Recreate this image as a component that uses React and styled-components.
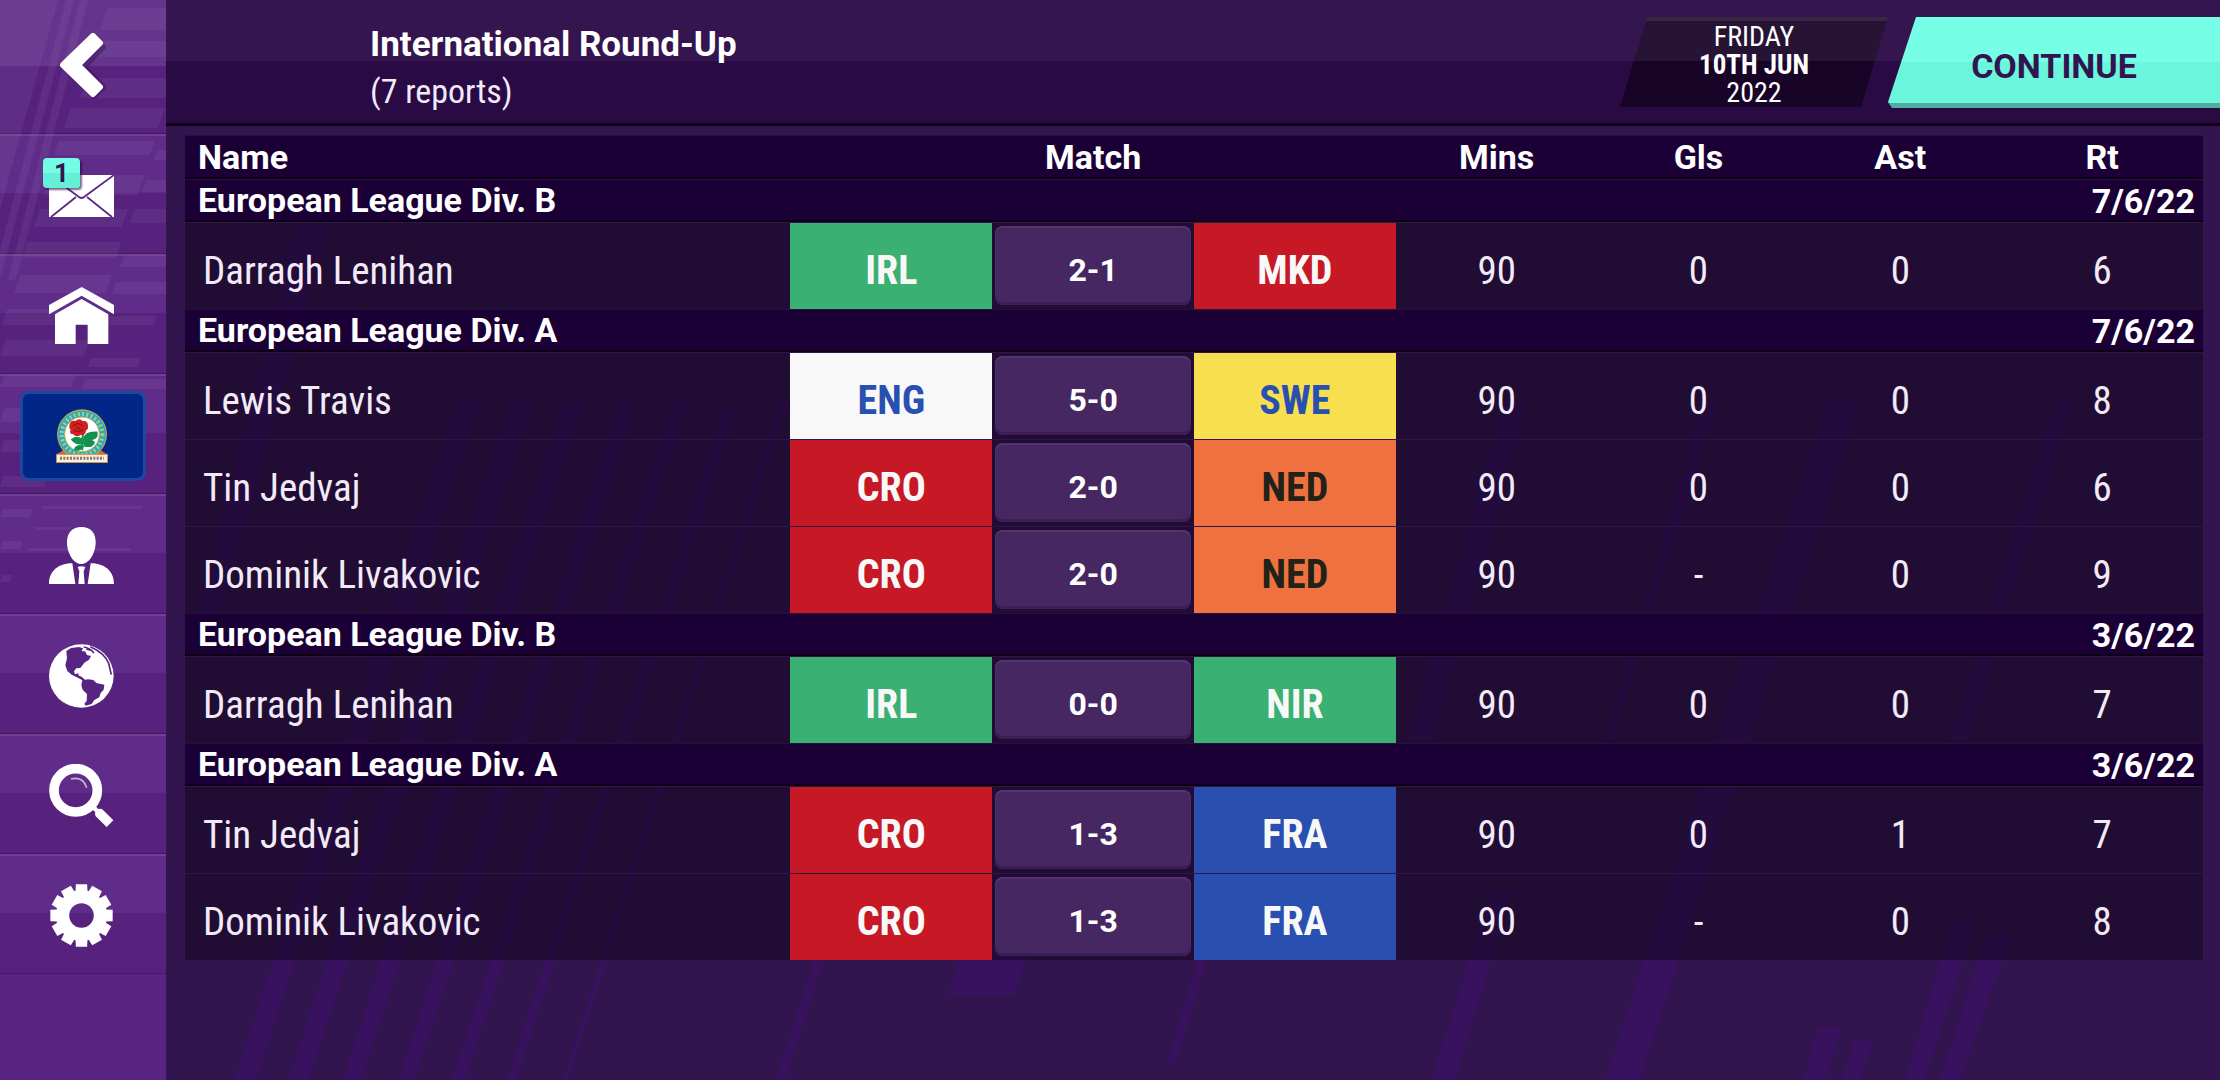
import React from "react";
import styled, { createGlobalStyle } from "styled-components";

const narrow = '"Roboto Condensed", "Liberation Sans Narrow", Roboto, sans-serif';
const bold = 'Roboto, "Liberation Sans", sans-serif';

const GlobalStyle = createGlobalStyle`
    * {
        box-sizing: border-box;
    }
    body {
        margin: 0;
        background: #32144e;
        color: #fff;
        font-family: ${bold};
    }
    button {
        border: 0;
        padding: 0;
        font: inherit;
        color: inherit;
        cursor: pointer;
    }
`;

const Page = styled.div`
    display: grid;
    grid-template-columns: 166px 1fr;
    min-height: 100vh;
`;

const Sidebar = styled.nav`
    position: relative;
    z-index: 0;
    display: flex;
    flex-direction: column;
    background: #582481;
`;

const SideArt = styled.svg`
    position: absolute;
    z-index: 1;
    top: 0;
    left: 0;
    pointer-events: none;
`;

const NavButton = styled.button`
    display: flex;
    align-items: center;
    justify-content: center;
    height: ${(props) => (props.$tall ? 134 : 120)}px;
    padding-top: ${(props) => (props.$tall ? 0 : 4)}px;
    background: linear-gradient(#5f2c89 50%, #56227e 50%);
    border-bottom: 1px solid #461968;
    box-shadow: ${(props) => (props.$tall ? "none" : "inset 0 2px #6d4190")};

    & > * {
        position: relative;
        z-index: 2;
    }
    svg {
        margin-right: 3px;
    }
`;

const MailIcon = styled.span`
    display: flex;
`;

const Badge = styled.span`
    position: absolute;
    top: -17px;
    left: -6px;
    width: 37px;
    height: 30px;
    border-radius: 4px;
    background: linear-gradient(#74fde4 50%, #66efd8 50%);
    box-shadow: 2px 2px 2px rgba(30, 10, 60, 0.6);
    color: #32144e;
    font-size: 26px;
    font-weight: 700;
    line-height: 30px;
    text-align: center;
`;

const Club = styled.span`
    display: flex;
    align-items: center;
    justify-content: center;
    width: 126px;
    height: 90px;
    border: 3px solid #1c48a2;
    border-radius: 9px;
    background: #002688;
`;

const Main = styled.main`
    position: relative;
    z-index: 0;
    min-width: 0;
`;

const MainArt = styled.svg`
    position: absolute;
    z-index: -1;
    top: 0;
    left: 0;
    width: 100%;
    height: 100%;
`;

const Header = styled.header`
    display: flex;
    align-items: flex-start;
    height: 126px;
    padding: 17px 0 0 204px;
    background: linear-gradient(#34154f 61px, #290a45 61px);
    border-bottom: 3px solid #100018;
`;

const Titles = styled.div`
    flex: 1;
    padding-top: 4px;
    line-height: 47px;
`;

const Title = styled.h1`
    margin: 0;
    font-size: 35px;
    font-weight: 700;
    line-height: inherit;
`;

const Subtitle = styled.p`
    margin: 0;
    font-family: ${narrow};
    font-size: 34px;
    color: #f2eaf7;
`;

const DateBox = styled.time`
    display: flex;
    flex-direction: column;
    align-items: center;
    width: 268px;
    height: 90px;
    padding-top: 6px;
    background: linear-gradient(#3a2745 4px, #271435 4px, #271435 44px, #180427 44px);
    clip-path: polygon(27px 0, 100% 0, 241px 100%, 0 100%);
    font-family: ${narrow};
    font-size: 28px;
    line-height: 28px;
`;

const Day = styled.strong`
    font-size: 27px;
`;

const Continue = styled.button`
    width: 332px;
    height: 91px;
    padding-top: 6px;
    background: linear-gradient(#76ffe6 45px, #6bf5dc 45px, #6bf5dc 86px, #4fae9f 86px);
    clip-path: polygon(28px 0, 100% 0, 100% 100%, 4px 100%, 0 85px);
    color: #32144e;
    font-size: 34px;
    font-weight: 700;
    text-transform: uppercase;
`;

const Content = styled.section`
    padding: 9px 17px 0 19px;
`;

const Table = styled.table`
    width: 100%;
    table-layout: fixed;
    border-collapse: collapse;
    font-size: 34px;

    th,
    td {
        padding: 0;
        text-align: center;
    }
`;

const HeadRow = styled.tr`
    height: ${(props) => (props.$group ? 43 : 44)}px;
    line-height: 42px;
    background: #1b0036;
    box-shadow: inset 0 1px #26103f, inset 0 -2px #0d0016;

    && th:first-child {
        padding-left: 13px;
        text-align: left;
    }
    && th:last-child {
        ${(props) => props.$group && "padding-right: 8px; text-align: right;"}
    }
`;

const Row = styled.tr`
    height: 87px;
    background: rgba(0, 0, 0, 0.34);
    box-shadow: inset 0 1px #2f1549;
    color: #f2eaf7;
    font-family: ${narrow};
    font-size: 39px;
`;

const Player = styled.th`
    && {
        padding: 10px 0 0 18px;
        font-weight: 400;
        text-align: left;
    }
`;

const Stat = styled.td`
    && {
        padding-top: 10px;
    }
`;

const Team = styled.td`
    && {
        padding-top: 10px;
    }
    background: ${(props) => props.$bg};
    background-clip: padding-box;
    border-top: 1px solid #2f1549;
    color: ${(props) => props.$fg};
    font-size: 40px;
    font-weight: 700;
`;

const Score = styled.button`
    display: block;
    width: calc(100% - 6px);
    height: 79px;
    margin: 0 auto;
    padding-top: 8px;
    border-radius: 8px;
    background: #462762;
    box-shadow: inset 0 2px #543470, inset 0 -3px #3c1d58, inset 0 0 0 1px #4c2c69;
    color: #fff;
    font-family: ${bold};
    font-size: 32px;
    font-weight: 700;
`;

const teams = {
    IRL: ["#3ab072", "#f8f8f8"],
    NIR: ["#3ab072", "#f8f8f8"],
    MKD: ["#c71826", "#f8f8f8"],
    CRO: ["#c71826", "#f8f8f8"],
    ENG: ["#f8f8f8", "#2950b0"],
    SWE: ["#f8df50", "#2950b0"],
    NED: ["#f07140", "#222218"],
    FRA: ["#2950b0", "#f8f8f8"],
};

const groups = [
    {
        name: "European League Div. B",
        date: "7/6/22",
        reports: [["Darragh Lenihan", "IRL", "2-1", "MKD", 90, 0, 0, 6]],
    },
    {
        name: "European League Div. A",
        date: "7/6/22",
        reports: [
            ["Lewis Travis", "ENG", "5-0", "SWE", 90, 0, 0, 8],
            ["Tin Jedvaj", "CRO", "2-0", "NED", 90, 0, 0, 6],
            ["Dominik Livakovic", "CRO", "2-0", "NED", 90, "-", 0, 9],
        ],
    },
    {
        name: "European League Div. B",
        date: "3/6/22",
        reports: [["Darragh Lenihan", "IRL", "0-0", "NIR", 90, 0, 0, 7]],
    },
    {
        name: "European League Div. A",
        date: "3/6/22",
        reports: [
            ["Tin Jedvaj", "CRO", "1-3", "FRA", 90, 0, 1, 7],
            ["Dominik Livakovic", "CRO", "1-3", "FRA", 90, "-", 0, 8],
        ],
    },
];

// [left edge at the bottom, bottom, left edge at the top, top, width at the bottom, width at the top]
const streaks = [
    [68, 1080, 291, 402, 22, 24],
    [122, 1080, 344, 402, 21, 24],
    [176, 1080, 397, 402, 19, 22],
    [232, 1080, 453, 402, 16, 20],
    [286, 1080, 506, 402, 13, 18],
    [341, 1080, 559, 402, 9, 15],
    [397, 1080, 612, 402, 5, 12],
    [610, 1080, 760, 600, 9, 15],
    [782, 995, 796, 950, 67, 67],
    [1000, 1065, 1040, 930, 9, 11],
    [1265, 1080, 1325, 890, 24, 22],
    [1439, 1080, 1660, 402, 35, 34],
    [1739, 1080, 1787, 917, 20, 24],
    [1774, 1080, 1820, 935, 20, 26],
    [1637, 1080, 1652, 1027, 22, 24],
    [1675, 1080, 1688, 1040, 19, 20],
    [1241, 740, 1338, 402, 27, 24],
    [1439, 740, 1536, 402, 8, 16],
    [1784, 740, 1887, 402, 18, 20],
    [30, 620, 130, 222, 22, 34],
];

// same order, for the lighter lines over the side bar
const sideStreaks = [
    [-22, 260, 50, 0, 8, 8],
    [-8, 280, 66, 0, 8, 8],
    [8, 280, 80, 0, 8, 8],
];

const slats = [
    [100, 8, 66, 22],
    [96, 41, 70, 16],
    [80, 78, 86, 20],
    [64, 108, 94, 20],
    [54, 141, 96, 14],
    [154, 150, 12, 10],
    [44, 175, 94, 20],
    [142, 180, 24, 12],
    [34, 209, 88, 18],
    [130, 209, 36, 14],
    [22, 242, 94, 16],
    [120, 255, 46, 12],
    [14, 275, 92, 18],
    [112, 282, 54, 12],
    [2, 309, 96, 16],
    [100, 316, 54, 9],
    [0, 340, 84, 16],
    [88, 358, 50, 9],
    [0, 375, 72, 12],
    [82, 379, 84, 10],
    [0, 408, 60, 14],
    [0, 440, 50, 12],
    [0, 476, 44, 11],
    [42, 506, 100, 3],
    [0, 509, 30, 8],
    [34, 527, 36, 3],
    [0, 541, 20, 8],
    [28, 548, 102, 3],
    [0, 575, 10, 7],
];

const Streaks = ({ items, fill, opacity }) =>
    items.map(([x1, y1, x2, y2, w1, w2]) => (
        <polygon
            key={`${x1}-${y1}`}
            fill={fill}
            opacity={opacity}
            points={`${x1},${y1} ${x1 + w1},${y1} ${x2 + w2},${y2} ${x2},${y2}`}
        />
    ));

const BackIcon = () => (
    <svg width="48" height="68" viewBox="0 0 48 68" aria-hidden="true">
        <path
            d="M36 5 45 14 26 34 45 54 36 63 6 34Z"
            fill="#3b1560"
            stroke="#3b1560"
            strokeWidth="6"
            strokeLinejoin="round"
            opacity=".5"
        />
        <path
            d="M35 3 42 10 20 32 42 54 35 61 5 32Z"
            fill="#fff"
            stroke="#fff"
            strokeWidth="6"
            strokeLinejoin="round"
        />
    </svg>
);

const EnvelopeIcon = () => (
    <svg width="65" height="42" viewBox="0 0 65 42" aria-hidden="true">
        <path d="M0 0h65v42H0z" fill="#fff" />
        <path
            d="M0 0 30 22q2.500 2 5 0L65 0M2 42 27 22M63 42 38 22"
            fill="none"
            stroke="#5a2883"
            strokeWidth="1.800"
        />
    </svg>
);

const HomeIcon = () => (
    <svg width="65" height="57" viewBox="0 0 195 171" fill="#fff" aria-hidden="true">
        <path d="M0 54 98 0l97 54v28L98 26 0 82z" />
        <path d="M18 82 98 36l80 46v89h-62v-58H80v58H18z" />
    </svg>
);

const PersonIcon = () => (
    <svg width="65" height="57" viewBox="0 0 195 171" fill="#fff" aria-hidden="true">
        <path d="M97 0c30 0 44 20 43 48-1 32-20 63-43 63S55 80 54 48C53 20 68 0 97 0z" />
        <path d="M0 171c0-42 32-62 70-62l9 62zM195 171c0-42-32-62-70-62l-9 62zM86 120q11-5 23 0l-5 13 3 38H88l3-38z" />
    </svg>
);

const GlobeIcon = () => (
    <svg width="65" height="64" viewBox="0 0 195 192" aria-hidden="true">
        <ellipse cx="97" cy="96" rx="97" ry="95" fill="#fff" />
        <path
            fill="#582481"
            d="M52 21 66 12 90 9 102 13 98 22 108 22 114 33 126 36 120 47 106 56 101 63 94 72 82 73 75 82 78 91 87 88 90 95 98 98 103 103 108 107 117 106 133 108 142 117 166 122 164 137 155 147 151 160 136 168 128 180 110 185 106 179 113 171 114 150 101 137 97 124 100 109 88 102 68 92 55 81 49 64 54 42z"
        />
        <path
            fill="none"
            stroke="#582481"
            strokeWidth="5"
            d="M104 9q18 2 31 18M124 8q44 20 55 50l8 34M112 15l16 4"
        />
    </svg>
);

const SearchIcon = () => (
    <svg width="65" height="63" viewBox="0 0 195 189" aria-hidden="true">
        <circle cx="80" cy="79" r="65" fill="none" stroke="#fff" strokeWidth="29" />
        <path d="M66 45q36-10 47 26" fill="none" stroke="#c9b2d8" strokeWidth="5" />
        <path d="m130 136 10-9 8 8q10-2 14 3l31 31-20 20-33-32q-4-6-1-12z" fill="#fff" />
    </svg>
);

const GearIcon = () => (
    <svg width="65" height="63" viewBox="-98 -95 196 190" aria-hidden="true">
        {[...Array(12)].map((_, i) => (
            <path key={i} d="M-18-70-17-94h34l1 24z" fill="#fff" transform={`rotate(${i * 30})`} />
        ))}
        <circle r="57" fill="none" stroke="#fff" strokeWidth="40" />
    </svg>
);

const Crest = () => (
    <svg width="52" height="54" viewBox="0 0 156 162" aria-hidden="true">
        <path d="M2 136 24 122h108l22 14z" fill="#d8642a" />
        <circle cx="78" cy="76" r="75" fill="#b9a648" />
        <circle cx="78" cy="76" r="71" fill="#28a8cc" />
        <circle
            cx="78"
            cy="76"
            r="61"
            fill="none"
            stroke="#a5d07a"
            strokeWidth="12"
            strokeDasharray="6 7"
        />
        <circle cx="78" cy="76" r="52" fill="#fff" stroke="#c6b14a" strokeWidth="3" />
        <path
            d="M84 64q-10 30-4 60M48 92q14-12 30 0 12 4 4 10-20 6-34-10zM84 90q4-22 38-20 4 16-12 20-14 8-26 0zM84 98q18-10 30 2-6 16-28 10zM56 122q4-16 26-10-8 14-26 10z"
            fill="#12924c"
            stroke="#12924c"
            strokeWidth="5"
        />
        <path
            d="M40 50q2-18 18-14 12-10 22 0 16-2 16 14 2 10-6 14 0 16-16 14-14 8-22-2-14-2-8-14-6-4-4-12z"
            fill="#d21f22"
        />
        <path d="M52 50q14-12 28 0M54 64q16 8 28-4M62 54l10 6" fill="none" stroke="#8e1418" strokeWidth="4" />
        <path d="M1 136h154v25H1z" fill="#f8f0dc" stroke="#c98f3c" strokeWidth="3" />
        <path d="M12 148h132" stroke="#8d6f74" strokeWidth="9" strokeDasharray="6 4" />
    </svg>
);

export default function App() {
    return (
        <>
            <GlobalStyle />
            <Page>
                <Sidebar aria-label="Main menu">
                    <NavButton $tall aria-label="Back">
                        <BackIcon />
                    </NavButton>
                    <NavButton aria-label="Inbox, 1 new">
                        <MailIcon>
                            <EnvelopeIcon />
                            <Badge>1</Badge>
                        </MailIcon>
                    </NavButton>
                    <NavButton aria-label="Home">
                        <HomeIcon />
                    </NavButton>
                    <NavButton aria-label="Club">
                        <Club>
                            <Crest />
                        </Club>
                    </NavButton>
                    <NavButton aria-label="Manager">
                        <PersonIcon />
                    </NavButton>
                    <NavButton aria-label="World">
                        <GlobeIcon />
                    </NavButton>
                    <NavButton aria-label="Search">
                        <SearchIcon />
                    </NavButton>
                    <NavButton aria-label="Settings">
                        <GearIcon />
                    </NavButton>
                    <SideArt width="166" height="620" aria-hidden="true">
                        <path d="M0 0H166V66H0z" fill="#fff" opacity=".04" />
                        <path d="M0 0H50L0 180z" fill="#fff" opacity=".05" />
                        <Streaks items={sideStreaks} fill="#fff" opacity=".05" />
                        {slats.map(([x, y, w, h]) => (
                            <polygon
                                key={`${x}-${y}`}
                                fill="#fff"
                                opacity=".05"
                                points={`${x + h / 3},${y} ${x + w + h / 3},${y} ${x + w},${y + h} ${x},${y + h}`}
                            />
                        ))}
                    </SideArt>
                </Sidebar>
                <Main>
                    <MainArt viewBox="0 0 2054 1080" preserveAspectRatio="xMidYMid slice" aria-hidden="true">
                        <Streaks items={streaks} fill="#38125e" />
                    </MainArt>
                    <Header>
                        <Titles>
                            <Title>International Round-Up</Title>
                            <Subtitle>(7 reports)</Subtitle>
                        </Titles>
                        <DateBox dateTime="2022-06-10">
                            <span>FRIDAY</span>
                            <Day>10TH JUN</Day>
                            <span>2022</span>
                        </DateBox>
                        <Continue>Continue</Continue>
                    </Header>
                    <Content>
                        <Table>
                            <colgroup>
                                <col width="30%" />
                                <col span="7" width="10%" />
                            </colgroup>
                            <thead>
                                <HeadRow>
                                    <th scope="col">Name</th>
                                    <th scope="colgroup" colSpan="3">
                                        Match
                                    </th>
                                    <th scope="col">Mins</th>
                                    <th scope="col">Gls</th>
                                    <th scope="col">Ast</th>
                                    <th scope="col">Rt</th>
                                </HeadRow>
                            </thead>
                            {groups.map((group, i) => (
                                <tbody key={i}>
                                    <HeadRow $group>
                                        <th colSpan="4">{group.name}</th>
                                        <th colSpan="4">{group.date}</th>
                                    </HeadRow>
                                    {group.reports.map(([player, home, score, away, ...stats]) => (
                                        <Row key={player}>
                                            <Player scope="row">{player}</Player>
                                            <Team $bg={teams[home][0]} $fg={teams[home][1]}>
                                                {home}
                                            </Team>
                                            <td>
                                                <Score>{score}</Score>
                                            </td>
                                            <Team $bg={teams[away][0]} $fg={teams[away][1]}>
                                                {away}
                                            </Team>
                                            {stats.map((stat, n) => (
                                                <Stat key={n}>{stat}</Stat>
                                            ))}
                                        </Row>
                                    ))}
                                </tbody>
                            ))}
                        </Table>
                    </Content>
                </Main>
            </Page>
        </>
    );
}
